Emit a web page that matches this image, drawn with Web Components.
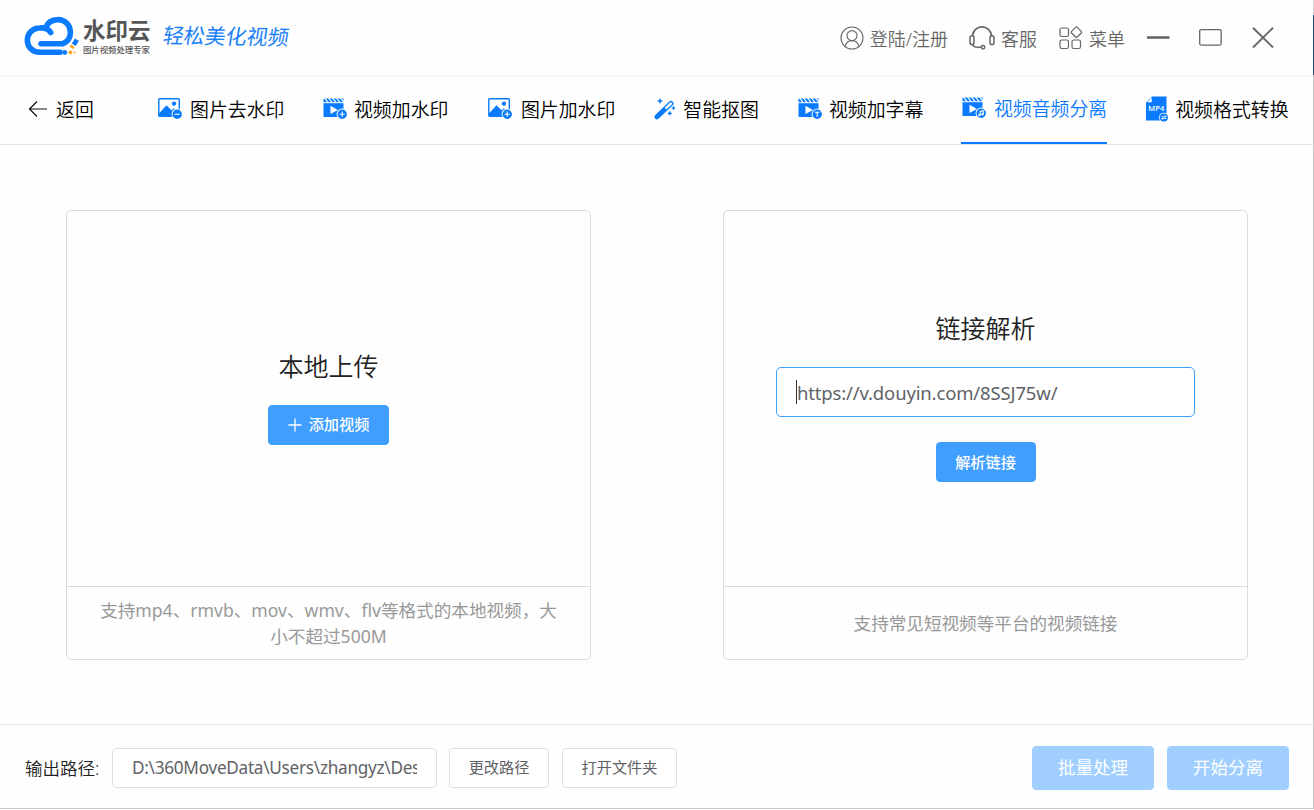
<!DOCTYPE html>
<html lang="zh-CN">
<head>
<meta charset="utf-8">
<title>水印云</title>
<style>
  html, body {
    margin: 0;
    height: 100%;
    overflow: hidden;
    background: #fefefe;
    font-family: "Noto Sans", "Noto Sans CJK SC", sans-serif;
  }
</style>
</head>
<body>
<app-window>
  <title-bar slot="header"></title-bar>
  <tab-bar slot="tabs">
    <tab-item icon="image-minus" style="--icon-box: 34px">图片去水印</tab-item>
    <tab-item icon="video-plus" style="--icon-box: 32px">视频加水印</tab-item>
    <tab-item icon="image-plus" style="--icon-box: 35px; --icon-left: 2px">图片加水印</tab-item>
    <tab-item icon="wand" style="--icon-box: 30.500px">智能抠图</tab-item>
    <tab-item icon="video-text" style="--icon-box: 32.500px">视频加字幕</tab-item>
    <tab-item icon="video-audio" active style="--icon-box: 33px">视频音频分离</tab-item>
    <tab-item icon="mp4" style="--icon-box: 30.500px">视频格式转换</tab-item>
  </tab-bar>
  <upload-card heading="本地上传">
    <ui-button type="primary" style="--w: 121px"><ui-icon name="plus" slot="icon"></ui-icon>添加视频</ui-button>
    <span slot="hint">支持mp4、rmvb、mov、wmv、flv等格式的本地视频，大<br>小不超过500M</span>
  </upload-card>
  <upload-card heading="链接解析">
    <ui-field focused value="https://v.douyin.com/8SSJ75w/" style="--w: 419px; --h: 50px; --size: 18.500px; --track: -.150px; margin-bottom: 25px"></ui-field>
    <ui-button type="primary" style="--w: 100px">解析链接</ui-button>
    <span slot="hint">支持常见短视频等平台的视频链接</span>
  </upload-card>
  <output-bar slot="footer"></output-bar>
</app-window>

<script>
const ICONS = {
  user: [24, 24, `<g fill="none" stroke="#666" stroke-width="1.1">
    <circle cx="12" cy="12" r="11"/><circle cx="12" cy="9.6" r="5"/>
    <path d="M5.3 20.4C6 16.6 8.7 14.6 12 14.6s6 2 6.7 5.8"/></g>`],
  headset: [26, 24, `<g fill="none" stroke="#666" stroke-width="1.5" stroke-linecap="round">
    <path d="M3.500 9.500C4 4.500 8 .900 13 .900s9 3.600 9.500 8.600" stroke-width="1.800"/>
    <rect x="1" y="9.800" width="4" height="8.700" rx="1.800"/>
    <rect x="21" y="9.800" width="4" height="8.700" rx="1.800"/>
    <path d="M3.500 18.500c.8 2 3 2.800 5.500 2.800H12"/><circle cx="14" cy="21.300" r="1.700"/></g>`],
  grid: [24, 24, `<g fill="none" stroke="#666" stroke-width="1.2">
    <rect x="1" y="2" width="8.500" height="8.500" rx="1.800"/>
    <rect x="1" y="14" width="8.500" height="8.500" rx="1.800"/>
    <rect x="13" y="14" width="8.500" height="8.500" rx="1.800"/>
    <rect x="13.400" y="2.200" width="8" height="8" rx="1.200" transform="rotate(45 17.400 6.200)"/></g>`],
  min: [24, 24, `<path d="M1 11.500h22.500" stroke="#666" stroke-width="2.600"/>`],
  max: [24, 24, `<rect x=".700" y="3.600" width="21.500" height="15.500" rx="1.500" fill="none" stroke="#666" stroke-width="1.300"/>`],
  close: [24, 24, `<path d="M2 1.800l20 19.700M22 1.800L2 21.500" stroke="#666" stroke-width="1.900"/>`],
  back: [20, 18, `<path d="M9 1.500L1.500 9 9 16.500M1.500 9H19" fill="none" stroke="#111" stroke-width="1.200"/>`],
  plus: [14, 14, `<path d="M7 .500v13M.500 7h13" stroke="#fff" stroke-width="1.300"/>`]
};

const picture = `<rect x=".800" y=".800" width="20.500" height="17.500" rx=".800" fill="#fff" stroke="#0a7bff" stroke-width="1.400"/>
  <circle cx="16" cy="5.600" r="2.200" fill="#0a7bff"/>
  <path d="M1 15.500L8.500 7.200l5 5 2.500-2 5 5v3.300H1z" fill="#0a7bff"/>`;
const clapper = `<path d="M.500 5.200h20V19h-20z" fill="#0a7bff"/>
  <path d="M.500.500h20v3.700h-20z" fill="#0a7bff"/>
  <path d="M1.500 0l3.700 4.700M5.500 0l3.700 4.700M9.500 0l3.700 4.700M13.500 0l3.700 4.700M17.500 0l3.700 4.700" stroke="#fff" stroke-width="1.200"/>
  <path d="M7.500 7.700v8.300l7.300-4.100z" fill="#fff"/>`;
const badge = (inner) => `<circle cx="19.200" cy="16.200" r="5.600" fill="#fff"/>
  <circle cx="19.200" cy="16.200" r="4.700" fill="#0a7bff"/>
  <g fill="none" stroke="#fff" stroke-width="1.100">${inner}</g>`;

ICONS['image-minus'] = [25, 22, picture + badge('<path d="M16.600 16.200h5.200"/>')];
ICONS['image-plus'] = [25, 22, picture + badge('<path d="M16.600 16.200h5.200M19.200 13.600v5.200"/>')];
ICONS['video-plus'] = [25, 22, clapper + badge('<path d="M16.600 16.200h5.200M19.200 13.600v5.200"/>')];
ICONS['video-text'] = [25, 22, clapper + badge('<path d="M17 14.300h4.400M19.200 14.300v4.500"/>')];
ICONS['video-audio'] = [25, 22, clapper + badge('<path d="M18.200 18v-3.600l3-.700v3.700"/><circle cx="17.500" cy="18" r=".700"/><circle cx="20.500" cy="17.300" r=".700"/>')];
ICONS.wand = [23, 22, `<path d="M3 18.800L17 5.400" stroke="#0a7bff" stroke-width="5" stroke-linecap="round"/>
  <path d="M12.300 9.900l4.500-4.300" stroke="#fff" stroke-width="2.500" stroke-linecap="round"/>
  <path d="M6 0l.900 2.100L9 3l-2.100.900L6 6l-.900-2.100L3 3l2.100-.900zM19.500 7.500l.700 1.800 1.800.700-1.800.700-.700 1.800-.700-1.800-1.800-.700 1.800-.700zM15.800 12.500l.8 2.100 2.100.8-2.100.8-.8 2.100-.8-2.100-2.100-.8 2.100-.8z" fill="#0a7bff"/>`];
ICONS.mp4 = [24, 26, `<path d="M6 .500h14.500v24H0V6.500z" fill="#0a7bff"/><path d="M1 6.200h4.700V1.300z" fill="#fff"/>
  <text x="10.200" y="15.300" text-anchor="middle" font-family="Open Sans" font-size="7.500" font-weight="600" fill="#fff" textLength="16">MP4</text>
  <circle cx="17.800" cy="21.500" r="4.800" fill="#fff"/><circle cx="17.800" cy="21.500" r="4.100" fill="#0a7bff"/>
  <path d="M15.500 20.800h4.700l-1.400-1.300M20.200 22.400h-4.700l1.400 1.300" fill="none" stroke="#fff" stroke-width=".900"/>`];

class UiIcon extends HTMLElement {
  connectedCallback() {
    const [w, h, body] = ICONS[this.getAttribute('name')];
    this.attachShadow({ mode: 'open' }).innerHTML = `
      <style>
        :host { display: inline-block; flex: none; width: ${w}px; height: ${h}px; }
        svg { display: block; }
      </style>
      <svg width="${w}" height="${h}" viewBox="0 0 ${w} ${h}">${body}</svg>
    `;
  }
}

class AppWindow extends HTMLElement {
  constructor() {
    super();
    this.attachShadow({ mode: 'open' }).innerHTML = `
      <style>
        :host {
          display: flex;
          flex-direction: column;
          box-sizing: border-box;
          width: 1314px;
          height: 809px;
          border-right: 1px solid #c9c9c9;
          border-bottom: 1px solid #c4c4c4;
          border-image: linear-gradient(#d8d8d8 0 16px, #1d4f80 16px 76px, #c9c9c9 76px) 1;
        }
        main {
          flex: 1;
          display: flex;
          justify-content: space-between;
          align-items: flex-start;
          padding: 65px 65px 0 66px;
        }
      </style>
      <slot name="header"></slot>
      <slot name="tabs"></slot>
      <main><slot></slot></main>
      <slot name="footer"></slot>
    `;
  }
}

class TitleBar extends HTMLElement {
  constructor() {
    super();
    this.attachShadow({ mode: 'open' }).innerHTML = `
      <style>
        :host {
          display: flex;
          align-items: center;
          box-sizing: border-box;
          height: 77px;
          padding: 0 38px 0 24px;
          border-bottom: 2px solid #f7f7f7;
          color: #666;
          font-size: 18px;
          font-weight: 350;
        }
        .logo { flex: none; margin-top: -3px; }
        .brand {
          width: 68px;
          margin-left: 4px;
          white-space: nowrap;
          color: #555;
          font-family: "Liberation Sans", "Noto Sans CJK SC", sans-serif;
        }
        .name { font-size: 22.5px; line-height: 26px; font-weight: 700; margin-top: -2px; }
        .tag { font-size: 8.4px; line-height: 10px; font-weight: 500; }
        .slogan {
          margin: -4px auto 0 12px;
          font-size: 21px;
          line-height: 30px;
          font-weight: 400;
          color: #1b80f5;
          transform: skewX(-8deg) rotate(1deg);
        }
        .item { display: flex; align-items: center; white-space: nowrap; }
        .item span { margin-left: 6px; }
      </style>
      <svg class="logo" width="55" height="42" viewBox="24 15 55 42" fill="none" stroke="#0a7bff" stroke-width="5.600" stroke-linecap="round">
        <path d="M60 52.300H39.500A12.100 12.100 0 0 1 39.500 28C45 27.500 48.500 29 50.700 32.500"/>
        <path d="M45.500 28C47.500 22.800 52 19.600 57.800 19.600c7.700 0 12.600 6 12.600 12.700 0 6-3.400 9.700-7.400 11.400H41"/>
        <circle cx="64.800" cy="52.500" r="2.400" fill="#0a7bff" stroke="none"/>
        <path d="M77 39.800l-3.300 5" stroke-width="4.600" stroke-linecap="butt"/>
        <path d="M73 45.800l-1.500 2.200" stroke="#ffa51f" stroke-width="4.200" stroke-linecap="butt"/>
        <circle cx="70.300" cy="52.300" r="1.900" fill="#ffa51f" stroke="none"/>
        <circle cx="74.500" cy="52.500" r="1" fill="#ffa51f" stroke="none"/>
      </svg>
      <div class="brand">
        <div class="name">水印云</div>
        <div class="tag">图片视频处理专家</div>
      </div>
      <div class="slogan">轻松美化视频</div>
      <div class="item"><ui-icon name="user"></ui-icon><span>登陆/注册</span></div>
      <div class="item" style="margin-left: 21px"><ui-icon name="headset"></ui-icon><span>客服</span></div>
      <div class="item" style="margin-left: 22px"><ui-icon name="grid"></ui-icon><span>菜单</span></div>
      <ui-icon name="min" style="margin-left: 21px"></ui-icon>
      <ui-icon name="max" style="margin-left: 29px"></ui-icon>
      <ui-icon name="close" style="margin-left: 28px"></ui-icon>
    `;
  }
}

class TabBar extends HTMLElement {
  constructor() {
    super();
    this.attachShadow({ mode: 'open' }).innerHTML = `
      <style>
        :host {
          display: flex;
          box-sizing: border-box;
          height: 68px;
          padding-left: 28px;
          border-bottom: 1px solid #e4e4e4;
          font-size: 18.9px;
          font-weight: 350;
          color: #000;
        }
        .back { display: flex; align-items: center; width: 128px; padding-bottom: 3px; box-sizing: border-box; white-space: nowrap; }
        .back span { margin-left: 8px; }
        nav { display: flex; gap: 37.500px; }
      </style>
      <div class="back"><ui-icon name="back"></ui-icon><span>返回</span></div>
      <nav><slot></slot></nav>
    `;
  }
}

class TabItem extends HTMLElement {
  connectedCallback() {
    this.attachShadow({ mode: 'open' }).innerHTML = `
      <style>
        :host {
          display: flex;
          align-items: center;
          box-sizing: border-box;
          white-space: nowrap;
          padding-bottom: 1px;
          border-bottom: 2px solid transparent;
        }
        :host([active]) { color: #0a7bff; border-color: #0a7bff; padding-bottom: 3px; }
        .icon {
          display: flex;
          box-sizing: border-box;
          width: var(--icon-box);
          padding-left: var(--icon-left, 1.500px);
        }
      </style>
      <span class="icon"><ui-icon name="${this.getAttribute('icon')}"></ui-icon></span>
      <slot></slot>
    `;
  }
}

class UploadCard extends HTMLElement {
  connectedCallback() {
    this.attachShadow({ mode: 'open' }).innerHTML = `
      <style>
        :host {
          display: flex;
          flex-direction: column;
          box-sizing: border-box;
          width: 525px;
          height: 450px;
          border: 1px solid #dcdcdc;
          border-radius: 5px;
        }
        .body {
          flex: 1;
          display: flex;
          flex-direction: column;
          align-items: center;
          justify-content: center;
          padding-bottom: 5px;
        }
        h2 {
          margin: 0 0 20px;
          font-size: 25px;
          line-height: 37px;
          font-weight: 350;
          color: #222;
        }
        .hint {
          display: flex;
          align-items: center;
          justify-content: center;
          height: 72px;
          border-top: 1px solid #dcdcdc;
          font-size: 17.600px;
          line-height: 26px;
          font-weight: 400;
          color: #999;
          text-align: center;
          white-space: nowrap;
        }
      </style>
      <div class="body">
        <h2>${this.getAttribute('heading')}</h2>
        <slot></slot>
      </div>
      <div class="hint"><slot name="hint"></slot></div>
    `;
  }
}

class UiButton extends HTMLElement {
  constructor() {
    super();
    this.attachShadow({ mode: 'open' }).innerHTML = `
      <style>
        :host { display: block; flex: none; }
        button {
          display: flex;
          align-items: center;
          justify-content: center;
          gap: 7px;
          box-sizing: border-box;
          width: var(--w);
          height: var(--h, 40px);
          padding: 0;
          border: 1px solid #dcdfe6;
          border-radius: 4px;
          background: #fff;
          color: #606266;
          font: 400 var(--size, 15.200px) "Noto Sans", "Noto Sans CJK SC", sans-serif;
          white-space: nowrap;
        }
        .label { padding-bottom: 3px; }
        :host([type="primary"]) button { background: #409eff; border-color: #409eff; color: #fff; font-weight: 500; }
        :host([disabled]) button { background: #a0cfff; border-color: #a0cfff; color: #fff; font-weight: 400; }
      </style>
      <button><slot name="icon"></slot><span class="label"><slot></slot></span></button>
    `;
  }
}

class UiField extends HTMLElement {
  connectedCallback() {
    this.attachShadow({ mode: 'open' }).innerHTML = `
      <style>
        :host {
          display: flex;
          align-items: center;
          box-sizing: border-box;
          width: var(--w);
          height: var(--h, 40px);
          padding: 0 19px;
          border: 1px solid #dcdfe6;
          border-radius: 5px;
          background: #fff;
          color: #606266;
          font-size: var(--size, 17.200px);
        }
        :host([focused]) { border-color: #409eff; }
        .caret { display: none; flex: none; width: 1px; height: 24px; margin-bottom: 1px; background: #333; }
        :host([focused]) .caret { display: block; }
        .value { flex: 1; overflow: hidden; white-space: nowrap; letter-spacing: var(--track, 0); }
      </style>
      <span class="caret"></span>
      <span class="value"></span>
    `;
    this.shadowRoot.querySelector('.value').textContent = this.getAttribute('value');
  }
}

class OutputBar extends HTMLElement {
  constructor() {
    super();
    this.attachShadow({ mode: 'open' }).innerHTML = `
      <style>
        :host {
          display: flex;
          align-items: center;
          box-sizing: border-box;
          height: 84px;
          padding: 2px 24px 0 25px;
          border-top: 1px solid #e4e4e4;
          font-size: 17.500px;
          color: #333;
        }
        label { width: 87px; white-space: nowrap; font-weight: 350; color: #222; }
        .actions { display: flex; gap: 13px; margin-left: auto; }
      </style>
      <label>输出路径:</label>
      <ui-field value="D:\\360MoveData\\Users\\zhangyz\\Des" style="--w: 325px; --track: -.280px"></ui-field>
      <ui-button style="--w: 100px; margin-left: 12px">更改路径</ui-button>
      <ui-button style="--w: 115px; margin-left: 13px">打开文件夹</ui-button>
      <div class="actions">
        <ui-button type="primary" disabled style="--w: 122px; --h: 44px; --size: 17.600px">批量处理</ui-button>
        <ui-button type="primary" disabled style="--w: 122px; --h: 44px; --size: 17.600px">开始分离</ui-button>
      </div>
    `;
  }
}

customElements.define('ui-icon', UiIcon);
customElements.define('app-window', AppWindow);
customElements.define('title-bar', TitleBar);
customElements.define('tab-bar', TabBar);
customElements.define('tab-item', TabItem);
customElements.define('upload-card', UploadCard);
customElements.define('ui-button', UiButton);
customElements.define('ui-field', UiField);
customElements.define('output-bar', OutputBar);
</script>
</body>
</html>
